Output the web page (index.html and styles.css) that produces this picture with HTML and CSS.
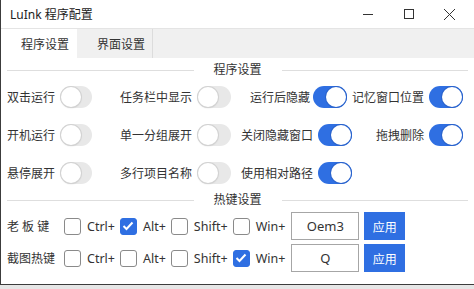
FILE: index.html
```html
<!DOCTYPE html>
<html lang="zh-CN">
<head>
    <meta charset="UTF-8">
    <title>LuInk 程序配置</title>
    <link rel="stylesheet" href="styles.css">
</head>
<body>
    <div class="window">
        <div class="titlebar">
            <span class="title">LuInk 程序配置</span>
            <div class="controls">
                <span class="ctl"><svg width="12" height="12" viewBox="0 0 12 12"><path d="M1 6.5H11" stroke="#333" stroke-width="1"/></svg></span>
                <span class="ctl"><svg width="12" height="12" viewBox="0 0 12 12"><rect x="1.5" y="1.5" width="9" height="9" fill="none" stroke="#333" stroke-width="1"/></svg></span>
                <span class="ctl"><svg width="13" height="13" viewBox="0 0 13 13"><path d="M1 1L12 12M12 1L1 12" stroke="#333" stroke-width="1"/></svg></span>
            </div>
        </div>

        <div class="tabs">
            <div class="tab active">程序设置</div>
            <div class="tab">界面设置</div>
        </div>

        <div class="content">
            <div class="section-title"><span>程序设置</span></div>

            <div class="switch-grid">
                <div class="cell">双击运行<span class="toggle"><i></i></span></div>
                <div class="cell">任务栏中显示<span class="toggle"><i></i></span></div>
                <div class="cell narrow">运行后隐藏<span class="toggle on"><i></i></span></div>
                <div class="cell">记忆窗口位置<span class="toggle on"><i></i></span></div>

                <div class="cell">开机运行<span class="toggle"><i></i></span></div>
                <div class="cell">单一分组展开<span class="toggle"><i></i></span></div>
                <div class="cell">关闭隐藏窗口<span class="toggle on"><i></i></span></div>
                <div class="cell">拖拽删除<span class="toggle on"><i></i></span></div>

                <div class="cell">悬停展开<span class="toggle"><i></i></span></div>
                <div class="cell">多行项目名称<span class="toggle"><i></i></span></div>
                <div class="cell">使用相对路径<span class="toggle on"><i></i></span></div>
                <div class="cell"></div>
            </div>

            <div class="section-title hot"><span>热键设置</span></div>

            <div class="hotkey-row">
                <span class="hk-label">老 板 键</span>
                <span class="check"></span><span class="key">Ctrl+</span>
                <span class="check checked"><svg width="12" height="10" viewBox="0 0 12 10"><path d="M1.5 5L4.5 8L10.5 1.5" fill="none" stroke="#fff" stroke-width="2"/></svg></span><span class="key">Alt+</span>
                <span class="check"></span><span class="key">Shift+</span>
                <span class="check"></span><span class="key">Win+</span>
                <input class="hk-input" type="text" value="Oem3">
                <button class="apply">应用</button>
            </div>
            <div class="hotkey-row">
                <span class="hk-label">截图热键</span>
                <span class="check"></span><span class="key">Ctrl+</span>
                <span class="check"></span><span class="key">Alt+</span>
                <span class="check"></span><span class="key">Shift+</span>
                <span class="check checked"><svg width="12" height="10" viewBox="0 0 12 10"><path d="M1.5 5L4.5 8L10.5 1.5" fill="none" stroke="#fff" stroke-width="2"/></svg></span><span class="key">Win+</span>
                <input class="hk-input" type="text" value="Q">
                <button class="apply">应用</button>
            </div>
        </div>
    </div>
</body>
</html>
```

FILE: styles.css
```css
* {
    box-sizing: border-box;
}
body {
    margin: 0;
    font-family: "Noto Sans", "Noto Sans CJK SC", sans-serif;
    font-size: 12px;
    color: #333;
    background: #e6e6e6;
    overflow: hidden;
}
.window {
    width: 474px;
    height: 285px;
    background: #fff;
    border-left: 1px solid #3c3c3c;
    border-bottom: 1px solid #3c3c3c;
}
.titlebar {
    height: 28px;
    display: flex;
    align-items: center;
    padding-left: 9px;
}
.title {
    font-size: 12px;
    color: #222;
}
.controls {
    margin-left: auto;
    display: flex;
    padding-right: 4px;
}
.ctl {
    width: 41px;
    height: 28px;
    display: flex;
    justify-content: center;
    align-items: center;
}
.tabs {
    height: 30px;
    display: flex;
    background: #f0f0f0;
    border-top: 1px solid #e4e4e4;
}
.tab {
    width: 76px;
    padding-left: 20px;
    display: flex;
    align-items: center;
    font-size: 12px;
    color: #333;
    border-right: 1px solid #dcdcdc;
}
.tab.active {
    background: #fff;
    border-right: none;
}
.content {
    padding: 4px 6px 0 6px;
}
.section-title {
    display: flex;
    align-items: center;
    height: 16px;
    line-height: 16px;
}
.section-title::before,
.section-title::after {
    content: "";
    flex: 1;
    height: 1px;
    background: #dedede;
}
.section-title span {
    margin: 0 20px;
}
.switch-grid {
    margin-top: 8px;
    display: grid;
    grid-template-columns: 85px 139px 121px 111px;
    grid-auto-rows: 22px;
    row-gap: 16px;
}
.cell {
    display: flex;
    justify-content: flex-end;
    align-items: center;
    gap: 5px;
    white-space: nowrap;
}
.cell.narrow {
    margin-right: 5px;
    gap: 3px;
}
.toggle {
    width: 34px;
    height: 22px;
    border-radius: 11px;
    background: #e8e8e8;
    display: flex;
    align-items: center;
    padding: 1px;
}
.toggle i {
    width: 20px;
    height: 20px;
    border-radius: 50%;
    background: #fff;
    box-shadow: 0 0 0 1px #d2d2d2, 0 1px 2px rgba(0, 0, 0, 0.15);
}
.toggle.on {
    background: #2f6fe2;
    justify-content: flex-end;
}
.toggle.on i {
    box-shadow: 0 0 0 1px #2a63cc;
}
.section-title.hot {
    margin-top: 8px;
}
.hotkey-row {
    margin-top: 4px;
    height: 28px;
    display: flex;
    align-items: center;
}
.hk-label {
    width: 57px;
    font-size: 12px;
    white-space: pre;
}
.check {
    width: 17px;
    height: 17px;
    border: 1px solid #8a8a8a;
    border-radius: 3px;
    background: #fff;
    display: flex;
    justify-content: center;
    align-items: center;
    margin-right: 6px;
}
.check.checked {
    background: #2f6fe2;
    border-color: #2f6fe2;
}
.key {
    font-size: 12.5px;
    color: #333;
    margin-right: 5px;
}
.hk-input {
    width: 68px;
    height: 28px;
    border: 1px solid #a6a6a6;
    font-family: "Noto Sans", sans-serif;
    font-size: 13px;
    color: #333;
    text-align: center;
    padding: 0;
    margin-left: 1px;
}
.apply {
    width: 41px;
    height: 28px;
    margin-left: 5px;
    border: none;
    background: #2f6fe2;
    color: #fff;
    font-family: "Noto Sans CJK SC", sans-serif;
    font-size: 12px;
    padding: 0;
}
```
